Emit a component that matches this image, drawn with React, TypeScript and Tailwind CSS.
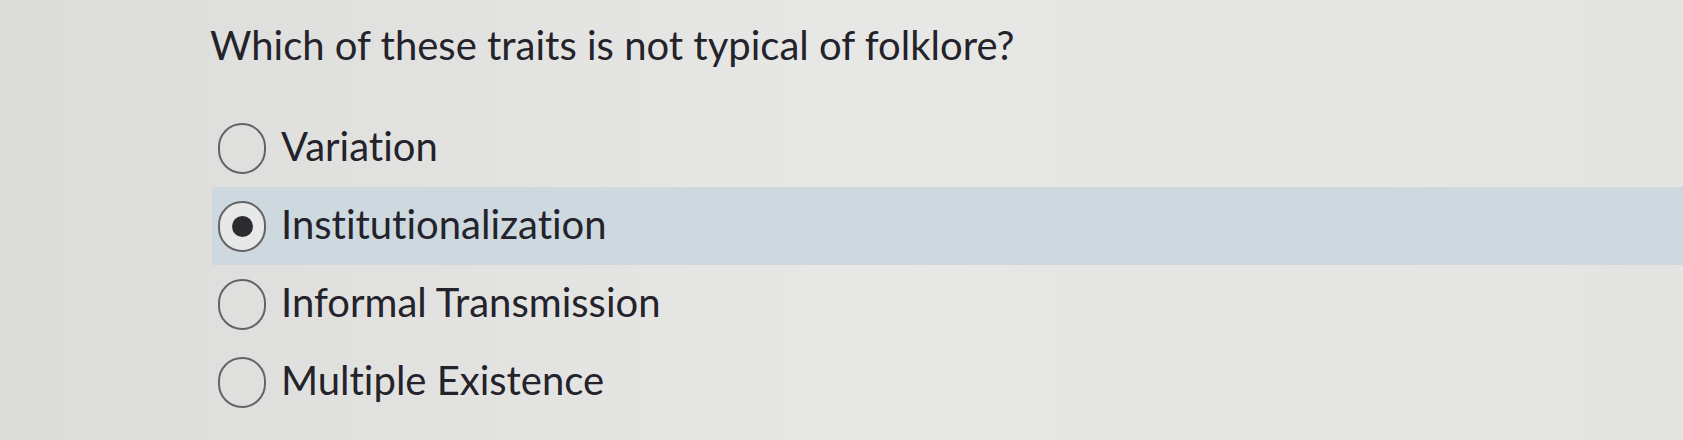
import React from "react";

const options = [
  { label: "Variation", checked: false },
  { label: "Institutionalization", checked: true },
  { label: "Informal Transmission", checked: false },
  { label: "Multiple Existence", checked: false },
];

function Radio({ checked }: { checked: boolean }) {
  return (
    <div
      className={
        "w-[48px] h-[51px] rounded-full border-[2.5px] border-[#646467] flex items-center justify-center shrink-0 " +
        (checked ? "bg-[#e7e9e9]" : "")
      }
    >
      {checked && <div className="w-[21px] h-[21px] rounded-full bg-[#2c2b30]" />}
    </div>
  );
}

export default function App() {
  return (
    <div
      className="w-[1683px] h-[440px] overflow-hidden bg-gradient-to-r from-[#dcdddb] via-[#e7e8e5] to-[#e4e5e2] text-[#24222a] [font-variant-ligatures:none]"
      style={{ fontFamily: "Lato, 'Open Sans', sans-serif" }}
    >
      <div className="pt-[17px] pl-[210px]">
        <h1 className="text-[40px] leading-[56px] font-normal">
          Which of these traits is not typical of folklore?
        </h1>
      </div>
      <div className="mt-[36px] ml-[212px] flex flex-col">
        {options.map((o) => (
          <div
            key={o.label}
            className={
              "h-[78px] flex items-center gap-[15px] pl-[6px] " +
              (o.checked ? "bg-[#cdd9df]" : "")
            }
          >
            <Radio checked={o.checked} />
            <span className="text-[40px] leading-[48px] -mt-[4px]">{o.label}</span>
          </div>
        ))}
      </div>
    </div>
  );
}
